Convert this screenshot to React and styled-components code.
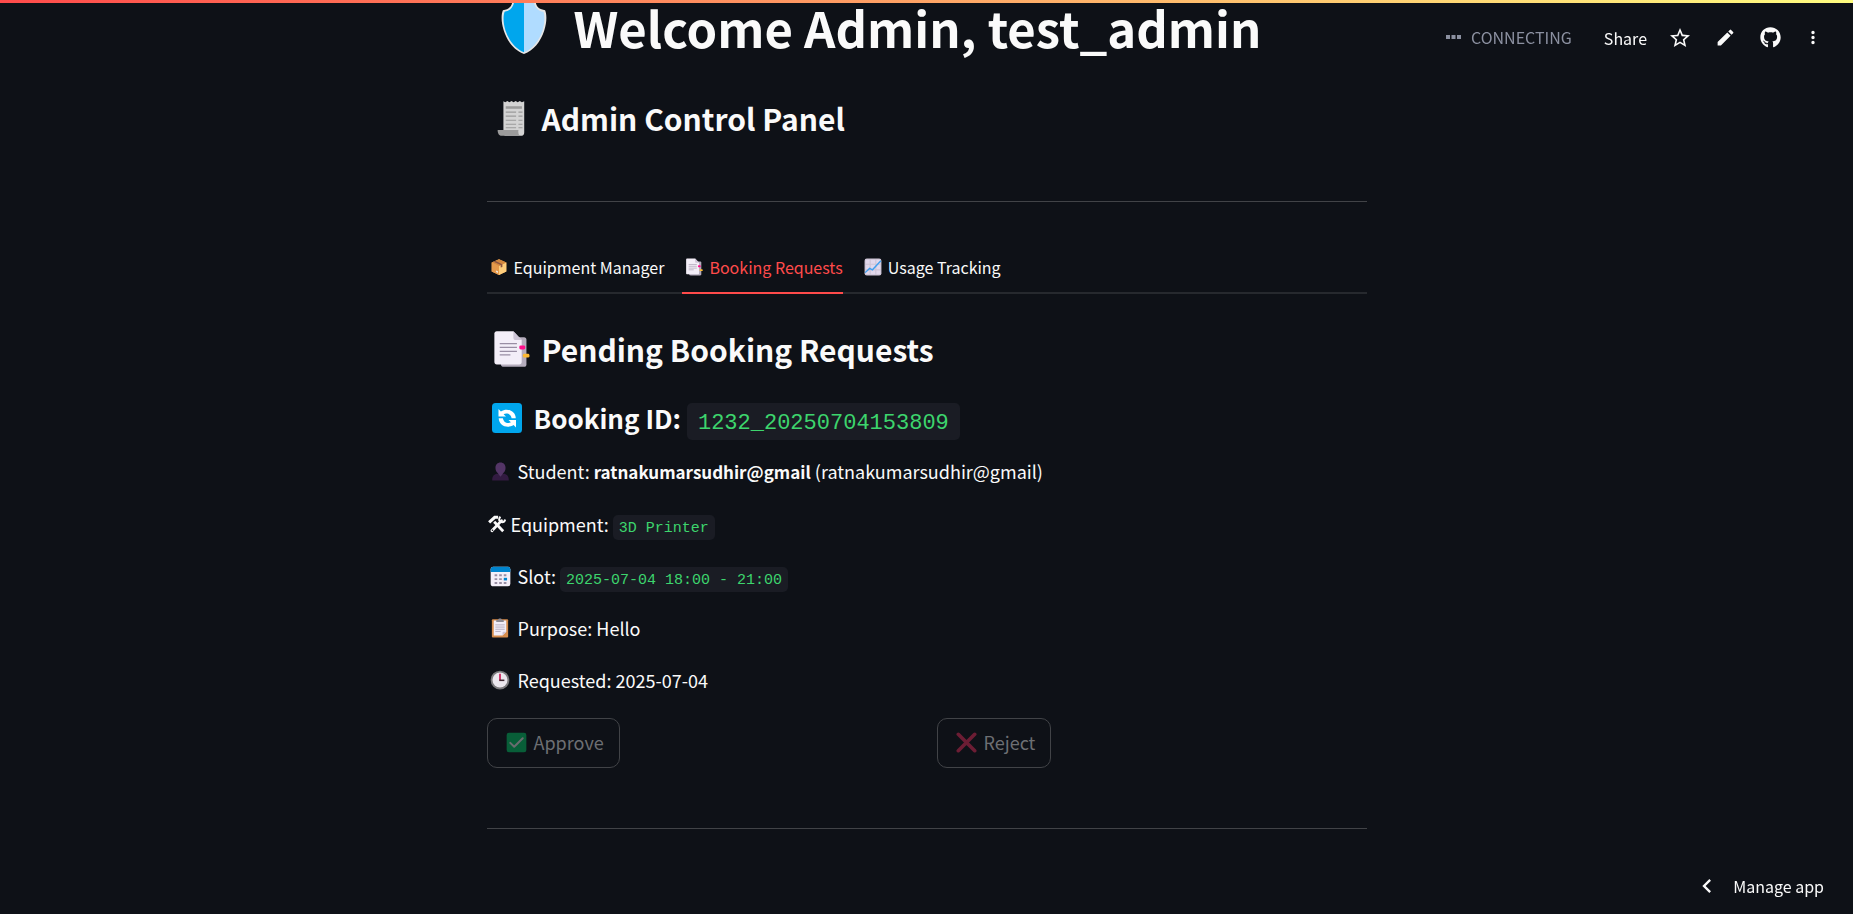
import React, { useState } from "react";
import styled, { createGlobalStyle } from "styled-components";
import { MdEdit, MdMoreVert, MdChevronLeft, MdStarOutline } from "react-icons/md";
import { FaGithub } from "react-icons/fa";

const sans = `"Noto Sans CJK SC", "Noto Sans", sans-serif`;
const mono = `"Liberation Mono", monospace`;

const GlobalStyle = createGlobalStyle`
  *, *::before, *::after { box-sizing: border-box; }
  body {
    margin: 0;
    background: #0e1117;
    color: #fafafa;
    font-family: ${sans};
    font-size: 18px;
    line-height: 32px;
  }
  h1, h2, h3, p { margin: 0; }
  button { font-family: inherit; color: inherit; background: none; border: 0; padding: 0; cursor: pointer; }
`;

const Decoration = styled.div`
  position: fixed;
  inset: 0 0 auto 0;
  height: 3px;
  background: linear-gradient(90deg, #ff4b4b, #fffd80);
  z-index: 2;
`;

const Toolbar = styled.header`
  position: fixed;
  top: 0;
  right: 0;
  height: 75px;
  padding-right: 30px;
  display: flex;
  align-items: center;
  font-size: 16px;
`;

const Status = styled.div`
  display: flex;
  align-items: center;
  gap: 10px;
  margin-right: 32px;
  padding-bottom: 2px;
  color: #8b90a0;
`;

const Actions = styled.div`
  display: flex;
  align-items: center;
  gap: 21px;
`;

const ToolButton = styled.button`
  display: flex;
  align-items: center;
  justify-content: center;
  min-width: 20px;
  height: 32px;
  font-size: 16px;
`;

const IconButton = styled(ToolButton)`
  width: ${(p) => (p.$narrow ? 20 : 24)}px;
`;

const Page = styled.main`
  width: 100%;
  max-width: 880px;
  margin: 0 auto;
  padding-bottom: 86px;
`;

const Heading = styled.div`
  display: flex;
  align-items: center;
  font-weight: 700;
`;

const Title = styled(Heading)`
  font-size: 49px;
  line-height: 54px;
  gap: 12px;
`;

const Subtitle = styled(Heading)`
  font-size: 30px;
  line-height: 42px;
  gap: 6px;
  margin-top: ${(p) => p.$space}px;
`;

const BookingTitle = styled(Heading)`
  font-size: 26px;
  line-height: 36px;
  gap: 6px;
  margin: 30px 0 19px;
`;

const Divider = styled.hr`
  height: 1px;
  border: 0;
  margin: ${(p) => p.$top}px 0 0;
  background: #414347;
`;

const TabList = styled.div`
  display: flex;
  gap: 18px;
  margin-top: 42px;
  box-shadow: inset 0 -2px #26292e;
`;

const Tab = styled.button`
  display: flex;
  align-items: center;
  gap: 3px;
  height: 50px;
  padding-bottom: 2px;
  font-size: 16px;
  line-height: 24px;
  color: ${(p) => (p["aria-selected"] ? "#ff4b4b" : "#fafafa")};
  border-bottom: 2px solid ${(p) => (p["aria-selected"] ? "#ff4b4b" : "transparent")};
`;

const Details = styled.div`
  display: flex;
  flex-direction: column;
  gap: 20px;
`;

const Detail = styled.p`
  display: flex;
  align-items: center;
  gap: 4px;
`;

const Strong = styled.strong`
  font-size: 17px;
  font-weight: 700;
`;

const Code = styled.code`
  font-family: ${mono};
  font-size: ${(p) => (p.$large ? 22 : 15)}px;
  font-weight: 400;
  line-height: 1;
  color: #3dd56d;
  background: #1a1c24;
  border-radius: 5px;
  padding: ${(p) => (p.$large ? "8px 11px 4px" : "5px 6px 3px")};
`;

const ButtonRow = styled.div`
  display: grid;
  grid-template-columns: 1fr 1fr;
  gap: 20px;
  margin-top: 22px;
`;

const ActionButton = styled.button`
  justify-self: start;
  display: flex;
  align-items: center;
  gap: 4px;
  height: 50px;
  padding: 0 15px 2px;
  font-size: 18px;
  border: 1px solid #414347;
  border-radius: 10px;
  &:disabled { color: #6d6f73; cursor: not-allowed; }
  &:disabled svg { opacity: 0.4; }
`;

const ManageButton = styled.button`
  position: fixed;
  right: 29px;
  bottom: 12px;
  display: flex;
  align-items: center;
  gap: 12px;
  font-size: 16px;
  line-height: 32px;
`;

const EmojiBox = styled.span`
  flex: none;
  display: inline-flex;
  align-items: center;
  justify-content: center;
  width: ${(p) => p.$box}px;
`;

function Emoji({ box, size, children }) {
  return (
    <EmojiBox $box={box} aria-hidden="true">
      <svg width={size} height={size} viewBox="0 0 32 32">
        {children}
      </svg>
    </EmojiBox>
  );
}

const Shield = (p) => (
  <Emoji {...p}>
    <path d="M16 0C13 0 10 .5 9 1.500C8.500 4.500 6.500 5.500 3.500 6C2.500 8 2.300 13 4 18C6 24.500 10.500 30 16 32C21.500 30 26 24.500 28 18C29.700 13 29.500 8 28.500 6C25.500 5.500 23.500 4.500 23 1.500C22 .5 19 0 16 0Z" fill="#e6e6e6" />
    <path d="M16 1.200H10.200C9.500 4.800 7.500 6.500 4.500 7C3.600 9.500 3.600 13.500 5 18C7 24 11 29 16 31Z" fill="#00a6ed" />
    <path d="M16 1.200H21.800C22.500 4.800 24.500 6.500 27.500 7C28.400 9.500 28.400 13.500 27 18C25 24 21 29 16 31Z" fill="#b0dcff" />
  </Emoji>
);

const Receipt = (p) => (
  <Emoji {...p}>
    <g transform="translate(2 0)">
      <path d="M7 1L8.600 2L10.400 .8L12.200 2L14 .8L15.800 2L17.600 .8L19.400 2L21.200 .8L23 2L25 1V28C25 30 24 31 22 31H8L7 27Z" fill="#d3d3d3" />
      <path d="M2 26H20C19.500 29 20.500 31 22 31H5.500C3.500 31 2 29.500 2 26Z" fill="#9b9b9b" />
      <path d="M9 6.500H23" stroke="#9b9b9b" strokeWidth="2.200" />
      <path d="M9 10.500H18M20 10.500H23.500M9 14H18M20 14H23.500M9 17.500H18M20 17.500H23.500M9 21H18M20 21H23.500M9 24H18M20 24H23.500" stroke="#9b9b9b" strokeWidth="1" />
    </g>
  </Emoji>
);

const Package = (p) => (
  <Emoji {...p}>
    <path d="M16 2L29 8V24L16 30L3 24V8Z" fill="#f3ad61" />
    <path d="M16 14L29 8V24L16 30Z" fill="#ffce7c" />
    <path d="M3 8L16 14V30L3 24Z" fill="#e69a4b" />
    <path d="M3 8L16 2L29 8L16 14Z" fill="#d3883e" />
    <path d="M9 5L22 11V16L19 17V12.500L6.500 6.500Z" fill="#8c5543" />
    <path d="M11 22L14 23.500V26.500L11 25Z" fill="#f4f4f4" />
  </Emoji>
);

const Bookmark = (p) => (
  <Emoji {...p}>
    <path d="M9 6H27C28.200 6 29 6.800 29 8V29C29 30.200 28.200 31 27 31H10C8.500 31 7.500 30.500 7.500 29Z" fill="#b4acbc" />
    <path d="M4 1H18L25 8.500V27C25 28.200 24.200 29 23 29H4C2.800 29 2 28.200 2 27V3C2 1.800 2.800 1 4 1Z" fill="#f3eef8" />
    <path d="M18 1L25 8.500H20C18.800 8.500 18 7.700 18 6.500Z" fill="#cdc4d6" />
    <path d="M6.500 11.500H21M6.500 14.700H21M6.500 18H21M6.500 21H15.500" stroke="#998ea4" strokeWidth="1" />
    <rect x="23" y="13" width="5" height="3.400" rx="1.200" fill="#ff0f8b" />
    <rect x="26" y="20" width="5.500" height="3.200" rx="1.200" fill="#fcb932" />
  </Emoji>
);

const Chart = (p) => (
  <Emoji {...p}>
    <rect x="1" y="1" width="30" height="30" rx="4" fill="#cdc4d6" />
    <path d="M3 3H10V10H3ZM12 3H20V10H12ZM22 3H29V10H22ZM3 12H10V20H3ZM12 12H20V20H12ZM22 12H29V20H22ZM3 22H10V29H3ZM12 22H20V29H12ZM22 22H29V29H22Z" fill="#e1d8ec" />
    <path d="M2 26L10 18.500L15 21L30 5" fill="none" stroke="#3f9fef" strokeWidth="2.400" />
  </Emoji>
);

const Refresh = (p) => (
  <Emoji {...p}>
    <rect x="1" y="1" width="30" height="30" rx="3.500" fill="#00a6ed" />
    <path d="M7.500 7V14.500H15L12.600 12.200C14.600 10.800 18 11.200 19.500 13.500C20.200 14.600 20.500 15.300 20.600 16.200H24.800C24.500 9 16.300 5.300 9.900 9.400Z" fill="#fff" />
    <path d="M25 25.500V18H17.500L19.900 20.300C17.900 21.700 14.500 21.300 13 19C12.300 17.900 12 17.200 11.900 16.300H7.700C8 23.500 16.200 27.200 22.600 23.100Z" fill="#fff" />
  </Emoji>
);

const Person = (p) => (
  <Emoji {...p}>
    <path d="M2 31C2 23 6 20.500 11 19.500L16 24L21 19.500C26 20.500 30 23 30 31Z" fill="#321b41" />
    <path d="M16 1C21 1 24.500 4.500 24.500 10C24.500 14 22.500 17.500 20 19V20L16 25L12 20V19C9.500 17.500 7.500 14 7.500 10C7.500 4.500 11 1 16 1Z" fill="#533566" />
  </Emoji>
);

const Tools = (p) => (
  <Emoji {...p}>
    <g fill="none" stroke="#fafafa">
      <path d="M11 12L27 29" strokeWidth="5" />
      <path d="M24 10L7 28" strokeWidth="5" strokeLinecap="round" />
      <path d="M2 13L12 4L18 4" strokeWidth="5.500" />
      <path d="M22 3C18 8 20 13 25 13C28 13 30 11 30.500 8" strokeWidth="3.500" />
    </g>
    <circle cx="8" cy="27" r="1.400" fill="#0e1117" />
  </Emoji>
);

const Calendar = (p) => (
  <Emoji {...p}>
    <rect x="1" y="1" width="30" height="30" rx="4" fill="#f3eef8" />
    <path d="M1 9V5C1 2.800 2.800 1 5 1H27C29.200 1 31 2.800 31 5V9Z" fill="#0084ce" />
    <path d="M7 14H11M14 14H18M21 14H25M7 20H11M14 20H18M7 26H11M14 26H18M21 26H25" stroke="#998ea4" strokeWidth="3" />
    <path d="M21 20H26" stroke="#0084ce" strokeWidth="4" />
  </Emoji>
);

const Clipboard = (p) => (
  <Emoji {...p}>
    <rect x="3" y="2" width="26" height="29" rx="1.500" fill="#d68c4c" />
    <path d="M6 4H26V22L20 28H6Z" fill="#f3eef8" />
    <path d="M26 22L20 28V23.500C20 22.500 20.500 22 21.500 22Z" fill="#cdc4d6" />
    <path d="M10 3H13C13 .3 19 .3 19 3H22V6.500H10Z" fill="#8d8a92" />
    <path d="M8.500 11H23.500M8.500 14.500H23.500M8.500 18H23.500M8.500 21.500H17" stroke="#a79eb1" strokeWidth="1.200" />
  </Emoji>
);

const Clock = (p) => (
  <Emoji {...p}>
    <circle cx="16" cy="16" r="15" fill="#7b7a7d" />
    <circle cx="16" cy="16" r="12" fill="#ebe7ee" />
    <path d="M16 6V17" stroke="#ca0b4a" strokeWidth="2.500" />
    <path d="M15 16.500H23" stroke="#402a32" strokeWidth="2.500" />
  </Emoji>
);

const Check = (p) => (
  <Emoji {...p}>
    <rect x="1" y="1" width="30" height="30" rx="3.500" fill="#00d26a" />
    <path d="M6.500 16.500L12.500 22.500L25.500 9.500" fill="none" stroke="#f4f4f4" strokeWidth="3" strokeLinecap="round" strokeLinejoin="round" />
  </Emoji>
);

const Cross = (p) => (
  <Emoji {...p}>
    <path d="M3.500 3.500L28.500 28.500M28.500 3.500L3.500 28.500" stroke="#f92f60" strokeWidth="5.500" strokeLinecap="round" />
  </Emoji>
);

const tabs = [
  { label: "Equipment Manager", Icon: Package },
  { label: "Booking Requests", Icon: Bookmark },
  { label: "Usage Tracking", Icon: Chart },
];

export default function App() {
  const [active, setActive] = useState(1);
  return (
    <>
      <GlobalStyle />
      <Decoration />
      <Toolbar>
        <Status role="status">
          <svg width="15" height="4" viewBox="0 0 15 4" fill="currentColor" aria-hidden="true">
            <path d="M0 0H4V4H0ZM5.500 0H9.500V4H5.500ZM11 0H15V4H11Z" />
          </svg>
          CONNECTING
        </Status>
        <Actions>
          <ToolButton>Share</ToolButton>
          <IconButton aria-label="Favorite"><MdStarOutline size={24} /></IconButton>
          <IconButton aria-label="Edit source"><MdEdit size={21} /></IconButton>
          <IconButton aria-label="View on GitHub"><FaGithub size={21} /></IconButton>
          <IconButton $narrow aria-label="Main menu"><MdMoreVert size={25} /></IconButton>
        </Actions>
      </Toolbar>

      <Page>
        <Title as="h1"><Shield box={75} size={54} />Welcome Admin, test_admin</Title>
        <Subtitle as="h2" $space={43}><Receipt box={49} size={37} />Admin Control Panel</Subtitle>
        <Divider $top={62} />

        <TabList role="tablist">
          {tabs.map(({ label, Icon }, i) => (
            <Tab key={label} role="tab" aria-selected={i === active} onClick={() => setActive(i)}>
              <Icon box={24} size={18} />
              {label}
            </Tab>
          ))}
        </TabList>

        <Subtitle as="h2" $space={34}><Bookmark box={49} size={38} />Pending Booking Requests</Subtitle>
        <BookingTitle as="h3">
          <Refresh box={41} size={32} />
          <span>Booking ID: <Code $large>1232_20250704153809</Code></span>
        </BookingTitle>

        <Details>
          <Detail><Person box={27} size={19} /><span>Student: <Strong>ratnakumarsudhir@gmail</Strong> (ratnakumarsudhir@gmail)</span></Detail>
          <Detail><Tools box={20} size={18} /><span>Equipment: <Code>3D Printer</Code></span></Detail>
          <Detail><Calendar box={27} size={21} /><span>Slot: <Code>2025-07-04 18:00 - 21:00</Code></span></Detail>
          <Detail><Clipboard box={27} size={20} /><span>Purpose: Hello</span></Detail>
          <Detail><Clock box={27} size={20} /><span>Requested: 2025-07-04</span></Detail>
        </Details>

        <ButtonRow>
          <ActionButton disabled><Check box={27} size={21} />Approve</ActionButton>
          <ActionButton disabled><Cross box={27} size={21} />Reject</ActionButton>
        </ButtonRow>
        <Divider $top={60} />
      </Page>

      <ManageButton><MdChevronLeft size={28} />Manage app</ManageButton>
    </>
  );
}
